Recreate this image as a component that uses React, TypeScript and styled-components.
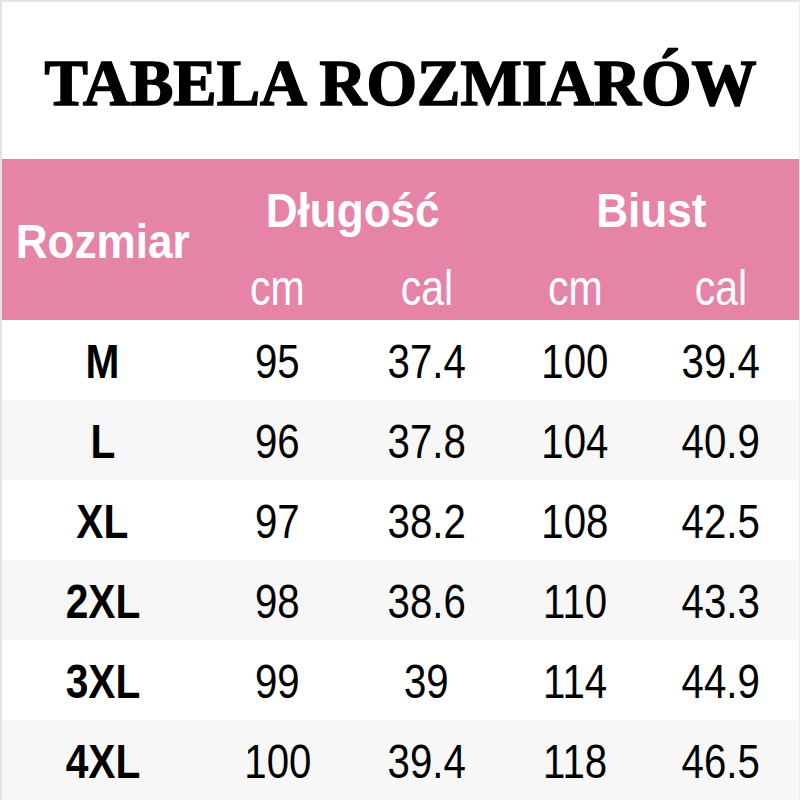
import styled, { createGlobalStyle } from "styled-components";

const GlobalStyle = createGlobalStyle`
  html, body {
    margin: 0;
    padding: 0;
    background: #fff;
  }
  body {
    font-family: "Liberation Sans", Arial, sans-serif;
  }
`;

const COLS = "201px 149px 149px 148px 144px";

const rows = [
  { size: "M", len: ["95", "37.4"], bust: ["100", "39.4"] },
  { size: "L", len: ["96", "37.8"], bust: ["104", "40.9"] },
  { size: "XL", len: ["97", "38.2"], bust: ["108", "42.5"] },
  { size: "2XL", len: ["98", "38.6"], bust: ["110", "43.3"] },
  { size: "3XL", len: ["99", "39"], bust: ["114", "44.9"] },
  { size: "4XL", len: ["100", "39.4"], bust: ["118", "46.5"] },
];

const Page = styled.div`
  width: 800px;
  height: 800px;
  box-sizing: border-box;
  border-top: 2px solid #e4e4e4;
  border-left: 2px solid #e4e4e4;
  border-right: 1px solid #ececec;
  overflow: hidden;
  display: flex;
  flex-direction: column;
`;

const TitleBar = styled.div`
  height: 157px;
  padding-top: 6px;
  box-sizing: border-box;
  display: flex;
  align-items: center;
  justify-content: center;
`;

const Title = styled.h1`
  margin: 0;
  font-family: "Liberation Serif", "Times New Roman", serif;
  font-weight: 700;
  font-size: 65px;
  line-height: 1;
  letter-spacing: 0;
  color: #000;
  -webkit-text-stroke: 1.6px #000;
`;

const Header = styled.div`
  background: #e684a8;
  height: 161px;
  box-sizing: border-box;
  padding-bottom: 6px;
  display: grid;
  grid-template-columns: ${COLS};
  grid-template-rows: 102px 53px;
  color: #fff;
`;

const HeadCell = styled.div<{ $col: string; $row: string; $pad?: number; $shift?: number }>`
  grid-column: ${(p) => p.$col};
  grid-row: ${(p) => p.$row};
  padding-top: ${(p) => p.$pad ?? 0}px;
  padding-left: ${(p) => p.$shift ?? 0}px;
  display: flex;
  align-items: center;
  justify-content: center;
`;

const Squeeze = styled.span<{ $x: number }>`
  display: inline-block;
  transform: scaleX(${(p) => p.$x});
  transform-origin: center;
  white-space: nowrap;
`;

const HeadLabel = styled(Squeeze)`
  font-size: 49px;
  font-weight: 700;
  line-height: 1;
`;

const UnitLabel = styled(Squeeze)`
  font-size: 50px;
  font-weight: 400;
  line-height: 1;
`;

const Row = styled.div<{ $shade: boolean }>`
  height: 80px;
  display: grid;
  grid-template-columns: ${COLS};
  background: ${(p) => (p.$shade ? "#f7f7f7" : "#fff")};
`;

const Cell = styled.div`
  display: flex;
  align-items: center;
  justify-content: center;
  padding-top: 2px;
  color: #000;
`;

const SizeText = styled(Squeeze)`
  font-size: 49px;
  font-weight: 700;
  line-height: 1;
`;

const ValueText = styled(Squeeze)`
  font-size: 49px;
  font-weight: 400;
  line-height: 1;
`;

const App = () => {
  return (
    <>
      <GlobalStyle />
      <Page>
        <TitleBar>
          <Title>TABELA ROZMIARÓW</Title>
        </TitleBar>
        <Header>
          <HeadCell $col="1" $row="1 / 3" $pad={10}>
            <HeadLabel $x={0.9}>Rozmiar</HeadLabel>
          </HeadCell>
          <HeadCell $col="2 / 4" $row="1" $shift={2}>
            <HeadLabel $x={0.9}>Długość</HeadLabel>
          </HeadCell>
          <HeadCell $col="4 / 6" $row="1" $shift={8}>
            <HeadLabel $x={0.9}>Biust</HeadLabel>
          </HeadCell>
          {["cm", "cal", "cm", "cal"].map((u, i) => (
            <HeadCell key={i} $col={`${i + 2}`} $row="2">
              <UnitLabel $x={0.82}>{u}</UnitLabel>
            </HeadCell>
          ))}
        </Header>
        {rows.map((r, i) => (
          <Row key={r.size} $shade={i % 2 === 1}>
            <Cell>
              <SizeText $x={0.83}>{r.size}</SizeText>
            </Cell>
            {[...r.len, ...r.bust].map((v, j) => (
              <Cell key={j}>
                <ValueText $x={0.82}>{v}</ValueText>
              </Cell>
            ))}
          </Row>
        ))}
      </Page>
    </>
  );
};

export default App;
